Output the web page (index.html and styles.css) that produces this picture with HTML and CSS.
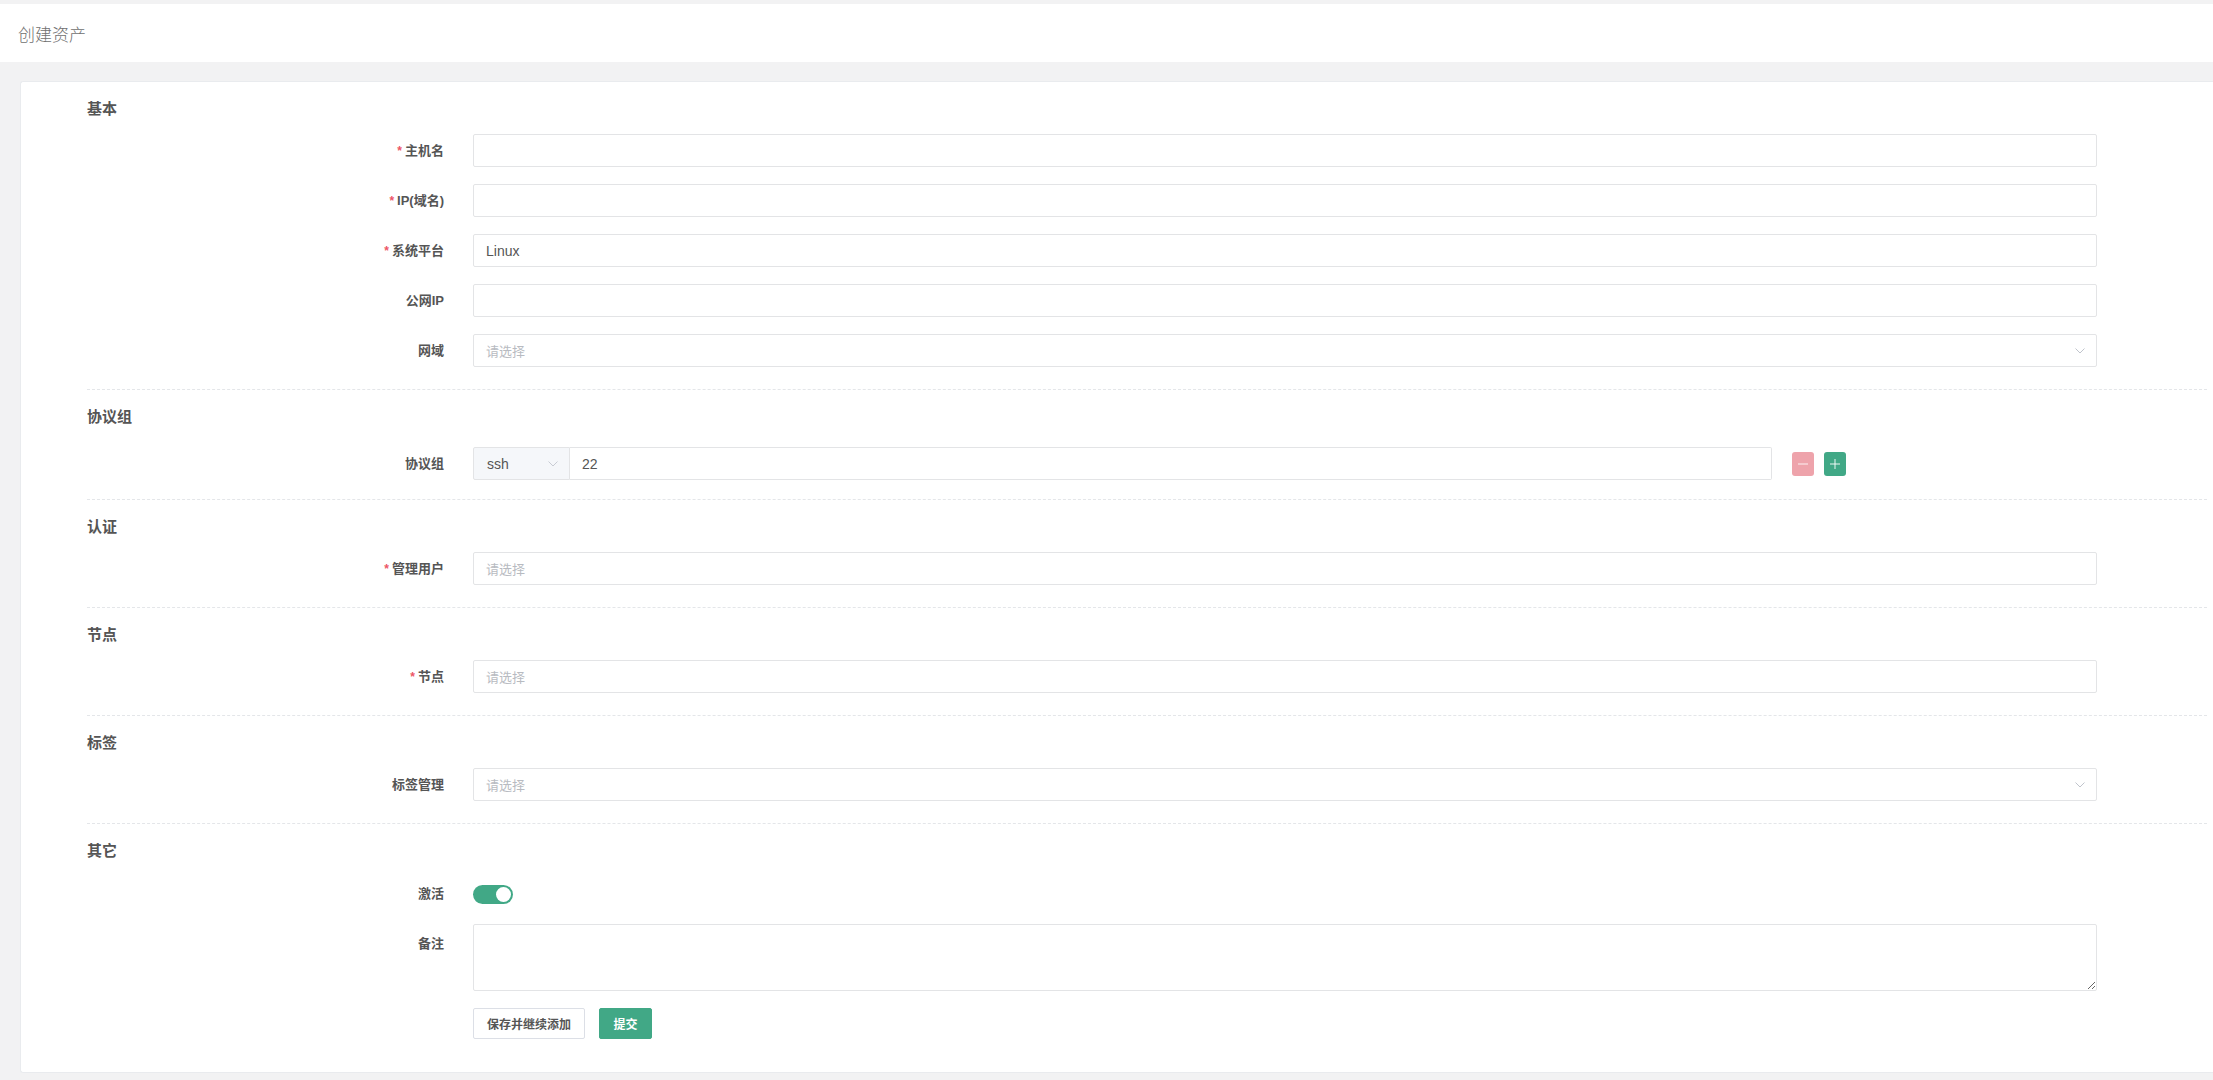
FILE: index.html
```html
<!DOCTYPE html>
<html lang="zh-CN">
<head>
<meta charset="utf-8">
<title>创建资产</title>
<link rel="stylesheet" href="styles.css">
</head>
<body>
<div class="page">
  <div class="topbar"><span class="title">创建资产</span></div>
  <div class="card">
    <section class="sec">
      <h3 class="sec-title">基本</h3>
      <div class="row"><label class="lbl"><span class="star">*</span>主机名</label><div class="ctl"><div class="inp"></div></div></div>
      <div class="row"><label class="lbl"><span class="star">*</span>IP(域名)</label><div class="ctl"><div class="inp"></div></div></div>
      <div class="row"><label class="lbl"><span class="star">*</span>系统平台</label><div class="ctl"><div class="inp"><span class="val">Linux</span></div></div></div>
      <div class="row"><label class="lbl">公网IP</label><div class="ctl"><div class="inp"></div></div></div>
      <div class="row"><label class="lbl">网域</label><div class="ctl"><div class="inp select"><span class="ph">请选择</span><svg class="chev" width="10" height="6" viewBox="0 0 10 6"><polyline points="0.5,0.5 5,5 9.5,0.5" fill="none" stroke="#c0c4cc" stroke-width="1"/></svg></div></div></div>
    </section>
    <section class="sec sec-proto">
      <h3 class="sec-title">协议组</h3>
      <div class="row"><label class="lbl">协议组</label>
        <div class="ctl ctl-proto">
          <div class="proto">
            <div class="proto-sel"><span class="val">ssh</span><svg class="chev" width="10" height="6" viewBox="0 0 10 6"><polyline points="0.5,0.5 5,5 9.5,0.5" fill="none" stroke="#c8ccd4" stroke-width="1"/></svg></div>
            <div class="proto-port"><span class="val">22</span></div>
          </div>
          <span class="sq sq-minus"><svg width="10" height="10" viewBox="0 0 10 10"><line x1="0" y1="5" x2="10" y2="5" stroke="rgba(255,255,255,0.85)" stroke-width="1"/></svg></span>
          <span class="sq sq-plus"><svg width="10" height="10" viewBox="0 0 10 10"><line x1="0" y1="5" x2="10" y2="5" stroke="rgba(255,255,255,0.9)" stroke-width="1"/><line x1="5" y1="0" x2="5" y2="10" stroke="rgba(255,255,255,0.9)" stroke-width="1"/></svg></span>
        </div>
      </div>
    </section>
    <section class="sec">
      <h3 class="sec-title">认证</h3>
      <div class="row"><label class="lbl"><span class="star">*</span>管理用户</label><div class="ctl"><div class="inp"><span class="ph">请选择</span></div></div></div>
    </section>
    <section class="sec">
      <h3 class="sec-title">节点</h3>
      <div class="row"><label class="lbl"><span class="star">*</span>节点</label><div class="ctl"><div class="inp"><span class="ph">请选择</span></div></div></div>
    </section>
    <section class="sec">
      <h3 class="sec-title">标签</h3>
      <div class="row"><label class="lbl">标签管理</label><div class="ctl"><div class="inp select"><span class="ph">请选择</span><svg class="chev" width="10" height="6" viewBox="0 0 10 6"><polyline points="0.5,0.5 5,5 9.5,0.5" fill="none" stroke="#c0c4cc" stroke-width="1"/></svg></div></div></div>
    </section>
    <section class="sec">
      <h3 class="sec-title">其它</h3>
      <div class="row row-switch"><label class="lbl">激活</label><div class="ctl"><span class="switch"><span class="knob"></span></span></div></div>
      <div class="row row-text"><label class="lbl lbl-top">备注</label><div class="ctl ctl-top"><textarea class="txt"></textarea></div></div>
      <div class="actions">
        <button class="btn btn-default">保存并继续添加</button>
        <button class="btn btn-primary">提交</button>
      </div>
    </section>
  </div>
</div>
</body>
</html>
```

FILE: styles.css
```css
html, body {
  margin: 0;
  padding: 0;
}
body {
  background: #f2f2f3;
  font-family: "Liberation Sans", "Noto Sans CJK SC", sans-serif;
  color: #555;
  overflow: hidden;
}
.page {
  padding-top: 4px;
  height: 1076px;
}
.topbar {
  height: 58px;
  background: #fff;
  display: flex;
  align-items: center;
  padding-left: 18px;
}
.title {
  font-size: 17px;
  font-weight: 300;
  color: #707070;
}
.card {
  margin: 19px 0 0 20px;
  background: #fff;
  border: 1px solid #e9ebee;
  border-right: none;
  border-radius: 3px 0 0 3px;
  padding: 0 6px 11px 66px;
}
.sec {
  padding: 17px 0 22px;
}
.sec + .sec {
  border-top: 1px dashed #e4e6e9;
}
.sec-title {
  margin: 0 0 15px;
  height: 20px;
  font-size: 15px;
  line-height: 20px;
  font-weight: bold;
  color: #555;
}
.sec-proto {
  padding-bottom: 19px;
}
.sec-proto .sec-title {
  margin-bottom: 20px;
}
.row {
  display: flex;
  height: 33px;
  margin-bottom: 17px;
}
.row:last-child {
  margin-bottom: 0;
}
.lbl {
  width: 386px;
  height: 33px;
  box-sizing: border-box;
  padding-right: 29px;
  text-align: right;
  font-size: 13px;
  font-weight: bold;
  line-height: 33px;
  color: #555;
  white-space: nowrap;
}
.lbl-top {
  padding-top: 3px;
}
.star {
  color: #ed5565;
  font-size: 12px;
  line-height: 1;
  margin-right: 3px;
}
.ctl {
  width: 1624px;
  display: flex;
  align-items: center;
}
.ctl-top {
  align-items: flex-start;
}
.inp {
  width: 100%;
  height: 33px;
  box-sizing: border-box;
  border: 1px solid #e3e4e6;
  border-radius: 2px;
  padding: 0 12px;
  display: flex;
  align-items: center;
  font-size: 13px;
  color: #555;
}
.select {
  justify-content: space-between;
  padding-right: 11px;
}
.val {
  color: #555;
  font-size: 14px;
}
.ph {
  color: #b8bbc1;
  font-size: 13px;
}
.chev {
  display: block;
}
.proto {
  width: 1299px;
  height: 33px;
  display: flex;
}
.proto-sel {
  width: 97px;
  box-sizing: border-box;
  background: #f5f7fa;
  border: 1px solid #e3e4e6;
  border-radius: 2px 0 0 2px;
  display: flex;
  align-items: center;
  justify-content: space-between;
  padding: 0 11px 0 13px;
}
.proto-port {
  flex: 1;
  border: 1px solid #e3e4e6;
  border-left: none;
  border-radius: 0 2px 2px 0;
  display: flex;
  align-items: center;
  padding-left: 12px;
}
.sq {
  width: 22px;
  height: 24px;
  border-radius: 3px;
  display: flex;
  align-items: center;
  justify-content: center;
}
.sq-minus {
  margin-left: 20px;
  background: #eea3ab;
}
.sq-plus {
  margin-left: 10px;
  background: #41a886;
}
.row-switch {
  height: 36px;
  margin-bottom: 12px;
}
.row-switch .lbl {
  height: 36px;
  line-height: 36px;
}
.switch {
  width: 40px;
  height: 19px;
  border-radius: 10px;
  background: #41a886;
  display: flex;
  align-items: center;
  justify-content: flex-end;
  padding-right: 2px;
  box-sizing: border-box;
}
.knob {
  width: 15px;
  height: 15px;
  border-radius: 50%;
  background: #fff;
}
.row-text {
  height: 67px;
}
.txt {
  width: 1624px;
  height: 67px;
  box-sizing: border-box;
  border: 1px solid #e3e4e6;
  border-radius: 2px;
  resize: vertical;
  margin: 0;
  display: block;
  font-family: inherit;
}
.actions {
  margin-top: 15px;
  padding-left: 386px;
  display: flex;
  gap: 14px;
}
.btn {
  height: 31px;
  box-sizing: border-box;
  border-radius: 2px;
  font-family: inherit;
  font-size: 12px;
  font-weight: bold;
  padding: 0;
  margin: 0;
}
.btn-default {
  width: 112px;
  background: #fff;
  border: 1px solid #dcdfe6;
  color: #555;
}
.btn-primary {
  width: 53px;
  background: #41a886;
  border: 1px solid #41a886;
  color: #fff;
}
```
